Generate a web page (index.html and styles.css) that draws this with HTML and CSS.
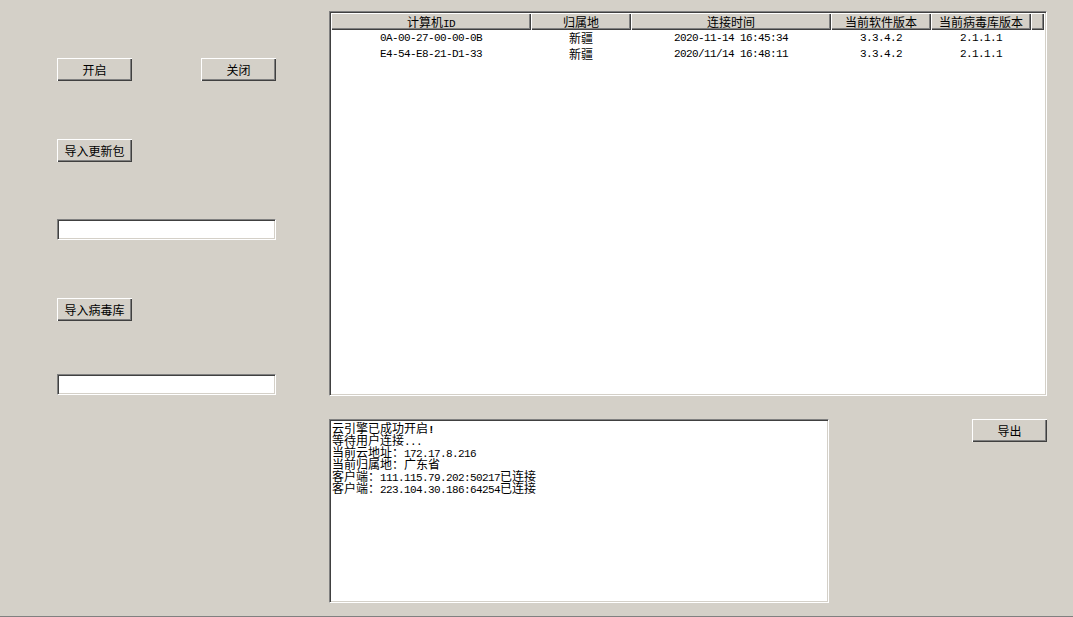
FILE: index.html
```html
<!DOCTYPE html>
<html lang="zh">
<head>
<meta charset="utf-8">
<title>云引擎服务端</title>
<link rel="stylesheet" href="styles.css">
</head>
<body>
<div class="window">
  <div class="left">
    <div class="btn-row">
      <button class="btn">开启</button>
      <button class="btn">关闭</button>
    </div>
    <button class="btn btn-update">导入更新包</button>
    <input class="field field-1" type="text">
    <button class="btn btn-virus">导入病毒库</button>
    <input class="field field-2" type="text">
  </div>
  <div class="right">
    <div class="list">
      <div class="list-head">
        <div class="hcell">计算机<span class="m">ID</span></div>
        <div class="hcell">归属地</div>
        <div class="hcell">连接时间</div>
        <div class="hcell">当前软件版本</div>
        <div class="hcell">当前病毒库版本</div>
        <div class="hcell"></div>
      </div>
      <div class="list-row">
        <div class="cell m">0A-00-27-00-00-0B</div>
        <div class="cell">新疆</div>
        <div class="cell m">2020-11-14 16:45:34</div>
        <div class="cell m">3.3.4.2</div>
        <div class="cell m">2.1.1.1</div>
        <div class="cell"></div>
      </div>
      <div class="list-row">
        <div class="cell m">E4-54-E8-21-D1-33</div>
        <div class="cell">新疆</div>
        <div class="cell m">2020/11/14 16:48:11</div>
        <div class="cell m">3.3.4.2</div>
        <div class="cell m">2.1.1.1</div>
        <div class="cell"></div>
      </div>
    </div>
    <div class="bottom">
      <div class="log">
        <div class="line">云引擎已成功开启<span class="m b">!</span></div>
        <div class="line">等待用户连接<span class="m">...</span></div>
        <div class="line">当前云地址：<span class="m">172.17.8.216</span></div>
        <div class="line">当前归属地：广东省</div>
        <div class="line">客户端：<span class="m">111.115.79.202:50217</span>已连接</div>
        <div class="line">客户端：<span class="m">223.104.30.186:64254</span>已连接</div>
      </div>
      <button class="btn btn-export">导出</button>
    </div>
  </div>
</div>
</body>
</html>
```

FILE: styles.css
```css
* { box-sizing: border-box; }
html, body { margin: 0; padding: 0; background: #d4d0c8; }
body {
  font-family: "Noto Sans CJK SC", "Noto Sans", sans-serif;
  font-size: 12px;
  color: #000;
}
.window {
  display: flex;
  height: 617px;
  border-bottom: 1px solid #808080;
  background: #d4d0c8;
  overflow: hidden;
}
.m {
  font-family: "Liberation Mono", "DejaVu Sans Mono", monospace;
  font-size: 11px;
  letter-spacing: -0.6px;
}
.b { font-weight: bold; }

/* left column */
.left {
  display: flex;
  flex-direction: column;
  align-items: flex-start;
  width: 219px;
  margin-left: 57px;
  padding-top: 58px;
}
.btn-row {
  display: flex;
  justify-content: space-between;
  width: 219px;
}
.btn {
  display: block;
  width: 75px;
  height: 23px;
  padding: 0;
  margin: 0;
  border: none;
  background: #d4d0c8;
  font-family: "Noto Sans CJK SC", sans-serif;
  font-size: 12px;
  line-height: 21px;
  color: #000;
  box-shadow: inset 1px 1px #ffffff, inset -1px -1px #404040, inset -2px -2px #808080;
}
.btn-update { margin-top: 58px; }
.field {
  display: block;
  width: 219px;
  height: 21px;
  margin: 0;
  border: 1px solid;
  border-color: #808080 #ffffff #ffffff #808080;
  box-shadow: inset 1px 1px #404040, inset -1px -1px #d4d0c8;
  background: #fff;
  padding: 0;
  outline: none;
}
.field-1 { margin-top: 57px; }
.btn-virus { margin-top: 58px; }
.field-2 { margin-top: 53px; }

/* right column */
.right {
  display: flex;
  flex-direction: column;
  width: 718px;
  margin-left: 53px;
  padding-top: 11px;
}
.list {
  height: 385px;
  background: #fff;
  border: 1px solid;
  border-color: #808080 #ffffff #ffffff #808080;
  box-shadow: inset 1px 1px #404040, inset -1px -1px #d4d0c8;
  padding: 1px;
}
.list-head, .list-row {
  display: grid;
  grid-template-columns: 200px 100px 200px 100px 100px 1fr;
}
.list-head { height: 17px; margin-right: 1px; }
.hcell {
  background: #d4d0c8;
  box-shadow: inset 1px 1px #ffffff, inset -1px -1px #404040, inset -2px -2px #808080;
  text-align: center;
  line-height: 17px;
  white-space: nowrap;
  overflow: hidden;
}
.list-row { height: 16px; }
.cell {
  text-align: center;
  line-height: 16px;
  white-space: nowrap;
}

.bottom {
  display: flex;
  align-items: flex-start;
  margin-top: 23px;
}
.log {
  width: 500px;
  height: 184px;
  background: #fff;
  border: 1px solid;
  border-color: #808080 #ffffff #ffffff #808080;
  box-shadow: inset 1px 1px #404040, inset -1px -1px #d4d0c8;
  padding: 2px;
}
.line {
  line-height: 12px;
  height: 12px;
  white-space: nowrap;
}
.btn-export { margin-left: auto; }
```
